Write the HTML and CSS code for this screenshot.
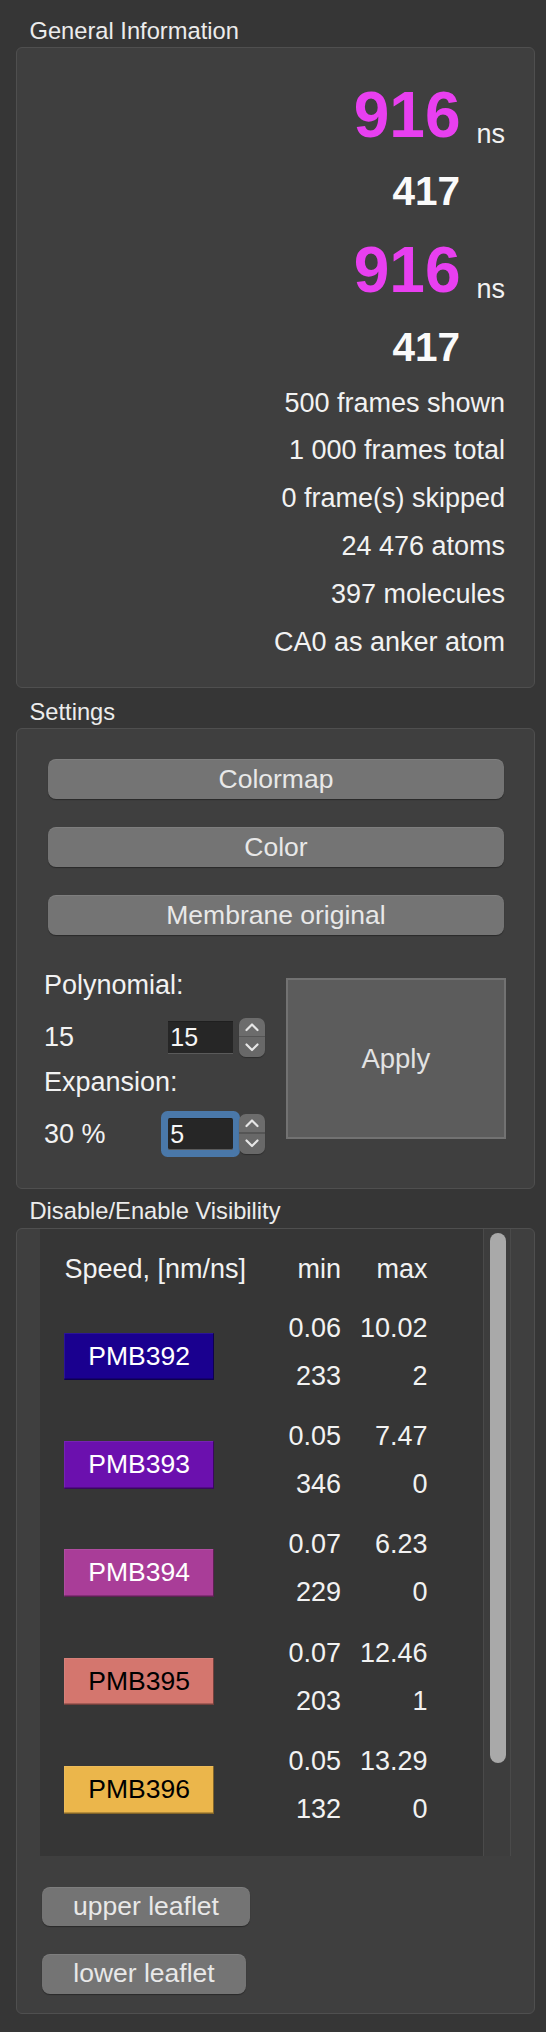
FILE: index.html
```html
<!DOCTYPE html>
<html>
<head>
<meta charset="utf-8">
<link rel="stylesheet" href="styles.css">
</head>
<body>
<div class="page">
  <div class="group-title">General Information</div>
  <section class="box info">
    <div class="time"><span class="big">916</span><span class="unit">ns</span></div>
    <div class="frame">417</div>
    <div class="time t2"><span class="big">916</span><span class="unit">ns</span></div>
    <div class="frame">417</div>
    <div class="stats">
      <div>500 frames shown</div>
      <div>1 000 frames total</div>
      <div>0 frame(s) skipped</div>
      <div>24 476 atoms</div>
      <div>397 molecules</div>
      <div>CA0 as anker atom</div>
    </div>
  </section>

  <div class="group-title settings-title">Settings</div>
  <section class="box settings">
    <button class="btn">Colormap</button>
    <button class="btn">Color</button>
    <button class="btn">Membrane original</button>
    <div class="params">
      <div class="fields">
        <div class="label">Polynomial:</div>
        <div class="spin-row">
          <span class="val">15</span>
          <span class="input">15</span>
          <span class="stepper">
            <svg width="26" height="39" viewBox="0 0 26 39"><path d="M7.5 12 L13 6.5 L18.5 12 M7.5 26.5 L13 32 L18.5 26.5" fill="none" stroke="#e6e6e6" stroke-width="2.2" stroke-linecap="round" stroke-linejoin="round"/></svg>
          </span>
        </div>
        <div class="label l2">Expansion:</div>
        <div class="spin-row r2">
          <span class="val">30 %</span>
          <span class="input focus">5</span>
          <span class="stepper">
            <svg width="26" height="39" viewBox="0 0 26 39"><path d="M7.5 12 L13 6.5 L18.5 12 M7.5 26.5 L13 32 L18.5 26.5" fill="none" stroke="#e6e6e6" stroke-width="2.2" stroke-linecap="round" stroke-linejoin="round"/></svg>
          </span>
        </div>
      </div>
      <button class="apply">Apply</button>
    </div>
  </section>

  <div class="group-title vis-title">Disable/Enable Visibility</div>
  <section class="box visibility">
    <div class="table">
      <div class="tbl-content">
        <div class="thead">
          <span class="head-name">Speed, [nm/ns]</span>
          <span class="num">min</span>
          <span class="num">max</span>
        </div>
        <div class="trow first">
          <span class="swatch s392">PMB392</span>
          <span class="num">0.06</span><span class="num">10.02</span>
          <span class="num">233</span><span class="num">2</span>
        </div>
        <div class="trow">
          <span class="swatch s393">PMB393</span>
          <span class="num">0.05</span><span class="num">7.47</span>
          <span class="num">346</span><span class="num">0</span>
        </div>
        <div class="trow">
          <span class="swatch s394">PMB394</span>
          <span class="num">0.07</span><span class="num">6.23</span>
          <span class="num">229</span><span class="num">0</span>
        </div>
        <div class="trow">
          <span class="swatch s395">PMB395</span>
          <span class="num">0.07</span><span class="num">12.46</span>
          <span class="num">203</span><span class="num">1</span>
        </div>
        <div class="trow">
          <span class="swatch s396">PMB396</span>
          <span class="num">0.05</span><span class="num">13.29</span>
          <span class="num">132</span><span class="num">0</span>
        </div>
      </div>
      <div class="scrolltrack"><div class="thumb"></div></div>
    </div>
    <button class="leaf upper">upper leaflet</button>
    <button class="leaf lower">lower leaflet</button>
  </section>
</div>
</body>
</html>
```

FILE: styles.css
```css
* { box-sizing: border-box; }
html, body { margin: 0; padding: 0; background: #363636; }
body {
  font-family: "Liberation Sans", Arial, sans-serif;
  color: #f2f2f2;
}
.page {
  width: 546px;
  height: 2032px;
  padding: 17px 11px 0 16px;
}
.group-title {
  font-size: 23.7px;
  line-height: 28px;
  height: 28px;
  margin: 0 0 2px 13.5px;
  color: #ececec;
  white-space: nowrap;
}
.settings-title { margin-top: 9.4px; }
.vis-title { margin-top: 8px; margin-bottom: 3px; }

.box {
  border: 1px solid #4f4f4f;
  border-radius: 6px;
  background: #3f3f3f;
}

/* General information */
.info {
  display: flex;
  flex-direction: column;
  align-items: flex-end;
  padding: 31.5px 29px 20.8px 29px;
}
.time {
  display: flex;
  align-items: flex-end;
  gap: 16px;
  height: 70px;
}
.time.t2 { margin-top: 20px; }
.big {
  font-size: 64px;
  font-weight: 700;
  line-height: 70px;
  color: #e83ff0;
}
.unit {
  font-size: 27px;
  line-height: 32px;
}
.frame {
  font-size: 40.5px;
  font-weight: 700;
  line-height: 48px;
  margin-top: 17.5px;
  margin-right: 45px;
  color: #fafafa;
}
.stats {
  margin-top: 9.2px;
  text-align: right;
  font-size: 27px;
  line-height: 47.8px;
  white-space: nowrap;
}

/* Settings */
.settings {
  padding: 30px 30px 33.9px 31px;
}
.btn, .leaf, .apply {
  font-family: "Liberation Sans", Arial, sans-serif;
  border: none;
  margin: 0;
  padding: 0;
  cursor: pointer;
}
.btn {
  display: block;
  width: 100%;
  height: 40px;
  border-radius: 8px;
  background: #747474;
  color: #e8e8e8;
  font-size: 26.5px;
  line-height: 40px;
  box-shadow: inset 0 1px 0 rgba(255,255,255,0.08), 0 1px 1px rgba(0,0,0,0.35);
}
.btn + .btn { margin-top: 28px; }

.params {
  display: flex;
  justify-content: space-between;
  align-items: flex-start;
  margin: 34.4px -1.6px 0 -4px;
}
.fields { width: 221px; }
.label {
  font-size: 27px;
  line-height: 32px;
  white-space: nowrap;
}
.label.l2 { margin-top: 9px; }
.spin-row {
  display: flex;
  align-items: center;
  height: 39.4px;
  margin-top: 16.6px;
}
.spin-row.r2 { margin-top: 16.3px; }
.val {
  width: 124.3px;
  font-size: 27px;
  line-height: 32px;
  white-space: nowrap;
}
.input {
  width: 65px;
  height: 32.6px;
  background: #262626;
  border-top: 1px solid #1f1f1f;
  border-bottom: 1px solid #5a5a5a;
  font-size: 25px;
  line-height: 31px;
  padding-left: 2px;
  color: #f6f6f6;
}
.input.focus {
  border-radius: 2px;
  box-shadow: 0 0 0 7px #4a78a9;
}
.stepper {
  display: block;
  margin-left: 6px;
  width: 25.7px;
  height: 39.4px;
  border-radius: 7px;
  background: linear-gradient(#6c6c6c 0 18.5px, #555 18.5px 19.5px, #686868 19.5px);
  box-shadow: 0 1px 1px rgba(0,0,0,0.3);
}
.stepper svg { display: block; }
.apply {
  margin-top: 9px;
  width: 219.6px;
  height: 161px;
  background: #5c5c5c;
  border: 2px solid #727272;
  color: #e2e2e2;
  font-size: 27.5px;
}

/* Visibility */
.visibility {
  padding: 0 23px 19px 23px;
}
.table {
  display: flex;
  height: 627.7px;
  background: #363636;
}
.tbl-content {
  flex: 1;
  padding: 16.7px 0 0 24.4px;
}
.thead, .trow {
  display: grid;
  grid-template-columns: 150px 126.6px 86.5px;
  font-size: 27px;
  line-height: 48px;
}
.thead { height: 48px; }
.head-name { white-space: nowrap; }
.num { text-align: right; white-space: nowrap; }
.trow {
  grid-template-rows: 48px 48px;
  margin-top: 12.3px;
}
.trow.first { margin-top: 10.4px; }
.swatch {
  grid-column: 1;
  grid-row: 1 / span 2;
  align-self: center;
  margin-top: 9.6px;
  width: 149.4px;
  height: 47.7px;
  text-align: center;
  font-size: 26.5px;
  line-height: 47.7px;
  box-shadow: inset -1px -1.5px 0 rgba(0,0,0,0.45), inset 1px 1px 0 rgba(255,255,255,0.08);
}
.s392 { background: #1a008f; color: #ffffff; }
.s393 { background: #6b10ae; color: #ffffff; }
.s394 { background: #a93d98; color: #ffffff; }
.s395 { background: #d4766e; color: #000000; }
.s396 { background: #ebb64b; color: #000000; }

.scrolltrack {
  width: 28.3px;
  background: #3d3d3d;
  border-left: 1px solid #4a4a4a;
  border-right: 1px solid #4a4a4a;
  padding: 4.7px 0 0 6.3px;
}
.thumb {
  width: 16px;
  height: 530px;
  border-radius: 8px;
  background: #a9a9a9;
}

.leaf {
  display: block;
  height: 39.5px;
  margin-left: 2px;
  border-radius: 8px;
  background: #747474;
  color: #e8e8e8;
  font-size: 26.5px;
  line-height: 39.5px;
  box-shadow: inset 0 1px 0 rgba(255,255,255,0.08), 0 1px 1px rgba(0,0,0,0.35);
}
.leaf.upper { width: 208px; margin-top: 30.7px; }
.leaf.lower { width: 204px; margin-top: 28px; }
```
